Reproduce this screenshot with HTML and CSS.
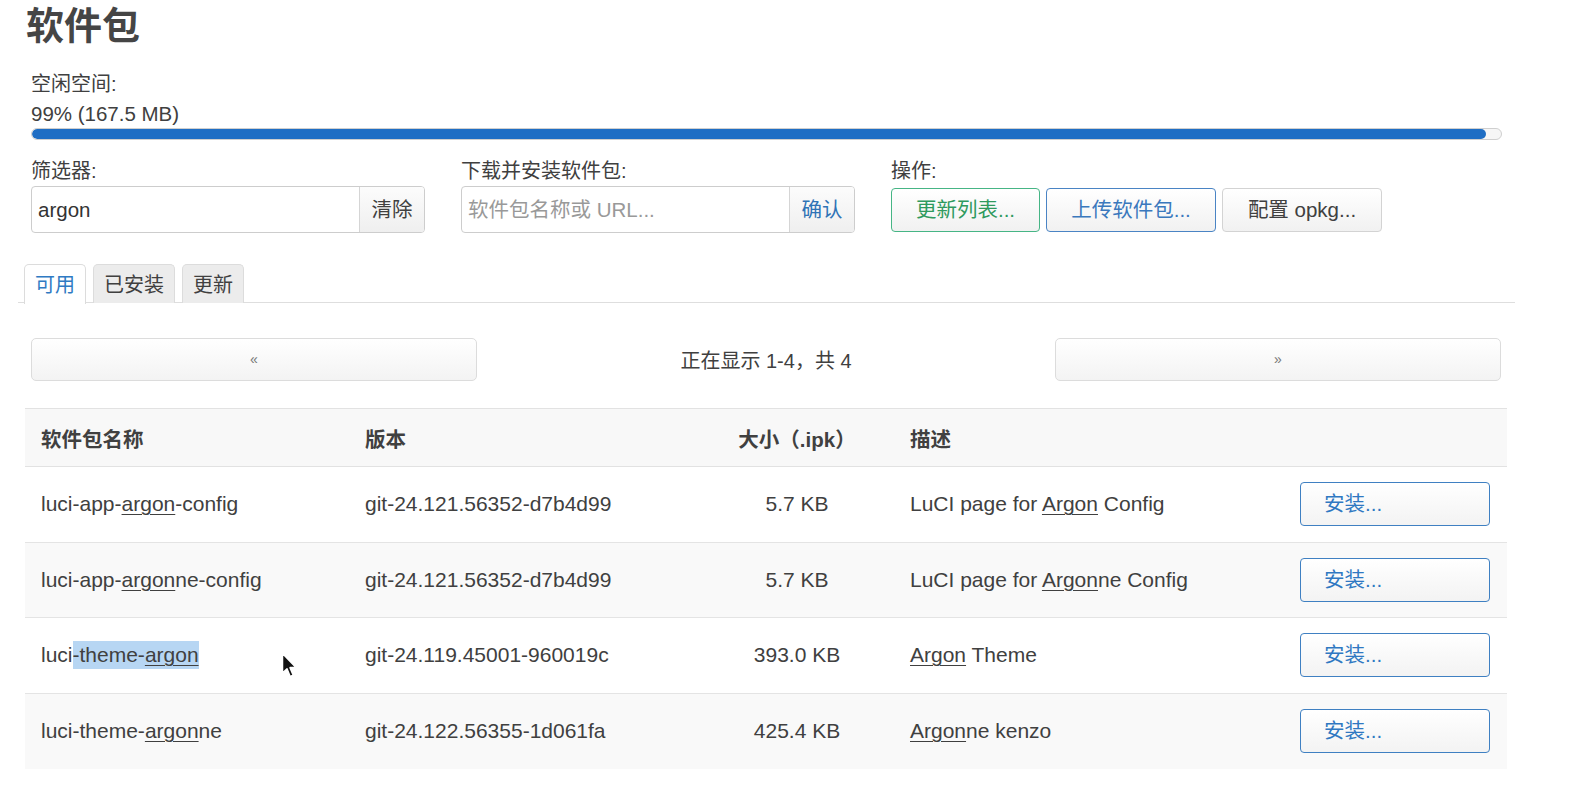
FILE: index.html
```html
<!DOCTYPE html>
<html lang="zh-CN">
<head>
<meta charset="utf-8">
<title>软件包</title>
<link rel="stylesheet" href="styles.css">
</head>
<body>
<div class="page">
  <h2 class="title">软件包</h2>

  <div class="space">
    <div class="space-label">空闲空间:</div>
    <div class="space-value">99% (167.5 MB)</div>
    <div class="bar"><div class="bar-fill" style="width: 99%"></div></div>
  </div>

  <div class="controls">
    <div class="group">
      <div class="group-label">筛选器:</div>
      <div class="input-group">
        <div class="input">argon</div>
        <div class="addon">清除</div>
      </div>
    </div>
    <div class="group">
      <div class="group-label">下载并安装软件包:</div>
      <div class="input-group">
        <div class="input placeholder">软件包名称或 URL...</div>
        <div class="addon addon-blue">确认</div>
      </div>
    </div>
    <div class="group">
      <div class="group-label">操作:</div>
      <div class="actions">
        <div class="btn btn-green">更新列表...</div>
        <div class="btn btn-blue">上传软件包...</div>
        <div class="btn btn-gray">配置 opkg...</div>
      </div>
    </div>
  </div>

  <ul class="tabs">
    <li class="tab active">可用</li>
    <li class="tab">已安装</li>
    <li class="tab">更新</li>
  </ul>

  <div class="pager">
    <div class="pager-btn">«</div>
    <div class="pager-text">正在显示 1-4，共 4</div>
    <div class="pager-btn">»</div>
  </div>

  <table class="pkg-table">
    <colgroup>
      <col class="c-name"><col class="c-ver"><col class="c-size"><col class="c-desc"><col class="c-act">
    </colgroup>
    <thead>
      <tr><th>软件包名称</th><th>版本</th><th class="center">大小（.ipk）</th><th>描述</th><th></th></tr>
    </thead>
    <tbody>
      <tr>
        <td>luci-app-<u>argon</u>-config</td>
        <td>git-24.121.56352-d7b4d99</td>
        <td class="center">5.7 KB</td>
        <td>LuCI page for <u>Argon</u> Config</td>
        <td><div class="install">安装...</div></td>
      </tr>
      <tr class="alt">
        <td>luci-app-<u>argon</u>ne-config</td>
        <td>git-24.121.56352-d7b4d99</td>
        <td class="center">5.7 KB</td>
        <td>LuCI page for <u>Argon</u>ne Config</td>
        <td><div class="install">安装...</div></td>
      </tr>
      <tr>
        <td>luci<span class="sel">-theme-<u>argon</u></span></td>
        <td>git-24.119.45001-960019c</td>
        <td class="center">393.0 KB</td>
        <td><u>Argon</u> Theme</td>
        <td><div class="install">安装...</div></td>
      </tr>
      <tr class="alt last">
        <td>luci-theme-<u>argon</u>ne</td>
        <td>git-24.122.56355-1d061fa</td>
        <td class="center">425.4 KB</td>
        <td><u>Argon</u>ne kenzo</td>
        <td><div class="install">安装...</div></td>
      </tr>
    </tbody>
  </table>

  <svg class="cursor" width="18" height="28" viewBox="0 0 18 28">
    <path d="M1.5 1.5 L1.5 21 L6 16.8 L9.2 24.5 L12.2 23.2 L9 15.6 L15 15.6 Z" fill="#111" stroke="#fff" stroke-width="1.5" stroke-linejoin="round"/>
  </svg>
</div>
</body>
</html>
```
FILE: styles.css
```css
* { box-sizing: border-box; }

html, body {
  margin: 0;
  padding: 0;
  background: #fff;
}

body {
  font-family: "Liberation Sans", "Noto Sans CJK SC", sans-serif;
  color: #404040;
  width: 1570px;
  height: 788px;
  overflow: hidden;
}

.page {
  position: relative;
  padding: 0;
}

.title {
  margin: 0 0 0 26px;
  font-size: 38px;
  line-height: 52px;
  font-weight: bold;
  color: #454545;
}

.space {
  margin: 17px 0 0 31px;
  width: 1471px;
}

.space-label {
  font-size: 20px;
  line-height: 30px;
}

.space-value {
  font-size: 20.5px;
  line-height: 29px;
}

.bar {
  height: 12px;
  border: 1px solid #cfcfcf;
  border-radius: 6px;
  background: #f6f6f6;
  overflow: hidden;
}

.bar-fill {
  height: 100%;
  background: #1f6ec4;
  border-radius: 5px;
}

.controls {
  display: flex;
  gap: 36px;
  margin: 17px 0 0 31px;
}

.group-label {
  font-size: 20px;
  line-height: 29px;
}

.input-group {
  display: flex;
  width: 394px;
  height: 47px;
  border: 1px solid #cdcdcd;
  border-radius: 4px;
  overflow: hidden;
}

.input {
  flex: 1;
  padding: 0 6px;
  font-size: 20.5px;
  line-height: 45px;
  color: #333;
}

.placeholder {
  color: #999;
}

.addon {
  width: 65px;
  border-left: 1px solid #d5d5d5;
  background: linear-gradient(#fcfcfc, #efefef);
  font-size: 20.5px;
  line-height: 45px;
  text-align: center;
  color: #404040;
}

.addon-blue {
  color: #2f73b6;
}

.actions {
  display: flex;
  gap: 6px;
  padding-top: 2px;
}

.btn {
  height: 44px;
  border-radius: 4px;
  border: 1px solid #ccc;
  background: linear-gradient(#ffffff, #f1f1f1);
  font-size: 20.5px;
  line-height: 42px;
  text-align: center;
}

.btn-green {
  width: 149px;
  border-color: #46b585;
  color: #2f9a5e;
}

.btn-blue {
  width: 170px;
  border-color: #4a84c4;
  color: #3a78bd;
}

.btn-gray {
  width: 160px;
  border-color: #d3d3d3;
  color: #404040;
}

.tabs {
  list-style: none;
  display: flex;
  gap: 7px;
  margin: 31px 0 0 18px;
  padding: 0 0 0 6px;
  width: 1497px;
  border-bottom: 1px solid #dedede;
  height: 39px;
}

.tab {
  height: 39px;
  padding: 0 10px;
  border: 1px solid #dcdcdc;
  border-bottom: none;
  border-radius: 5px 5px 0 0;
  background: #ececec;
  font-size: 20px;
  line-height: 40px;
  color: #404040;
}

.tab.active {
  background: #fff;
  color: #2f7ac3;
  height: 40px;
}

.pager {
  display: grid;
  grid-template-columns: 446px 1fr 446px;
  align-items: center;
  width: 1470px;
  margin: 35px 0 0 31px;
}

.pager-btn {
  height: 43px;
  border: 1px solid #dcdcdc;
  border-radius: 5px;
  background: linear-gradient(#ffffff, #f3f3f3);
  text-align: center;
  font-size: 14px;
  line-height: 41px;
  color: #777;
}

.pager-text {
  text-align: center;
  font-size: 20px;
  color: #404040;
}

.pkg-table {
  margin: 27px 0 0 25px;
  width: 1482px;
  table-layout: fixed;
  border-collapse: collapse;
  font-size: 21px;
}

.c-name { width: 324px; }
.c-ver { width: 351px; }
.c-size { width: 194px; }
.c-desc { width: 390px; }
.c-act { width: 223px; }

.pkg-table th {
  height: 58px;
  padding: 0 16px;
  text-align: left;
  font-size: 20.5px;
  font-weight: bold;
  background: #f8f8f8;
  border-top: 1px solid #e2e2e2;
  border-bottom: 1px solid #e2e2e2;
  color: #404040;
}

.pkg-table td {
  height: 75.5px;
  padding: 0 16px;
  vertical-align: middle;
  border-bottom: 1px solid #e4e4e4;
  white-space: nowrap;
  color: #404040;
}

.pkg-table tr.last td {
  border-bottom: none;
}

.pkg-table tr.alt td {
  background: #f9f9f9;
}

.pkg-table .center {
  text-align: center;
}

.pkg-table u {
  text-decoration-thickness: 1px;
  text-underline-offset: 3px;
}

.sel {
  background: #b7d6f3;
  padding: 2px 0 3px;
}

.install {
  width: 190px;
  height: 44px;
  border: 1px solid #3f80c2;
  border-radius: 4px;
  background: linear-gradient(#ffffff, #f3f3f3);
  color: #2f78c2;
  font-size: 20.5px;
  line-height: 42px;
  padding-left: 23px;
}

.cursor {
  position: absolute;
  left: 281px;
  top: 652px;
}
```
